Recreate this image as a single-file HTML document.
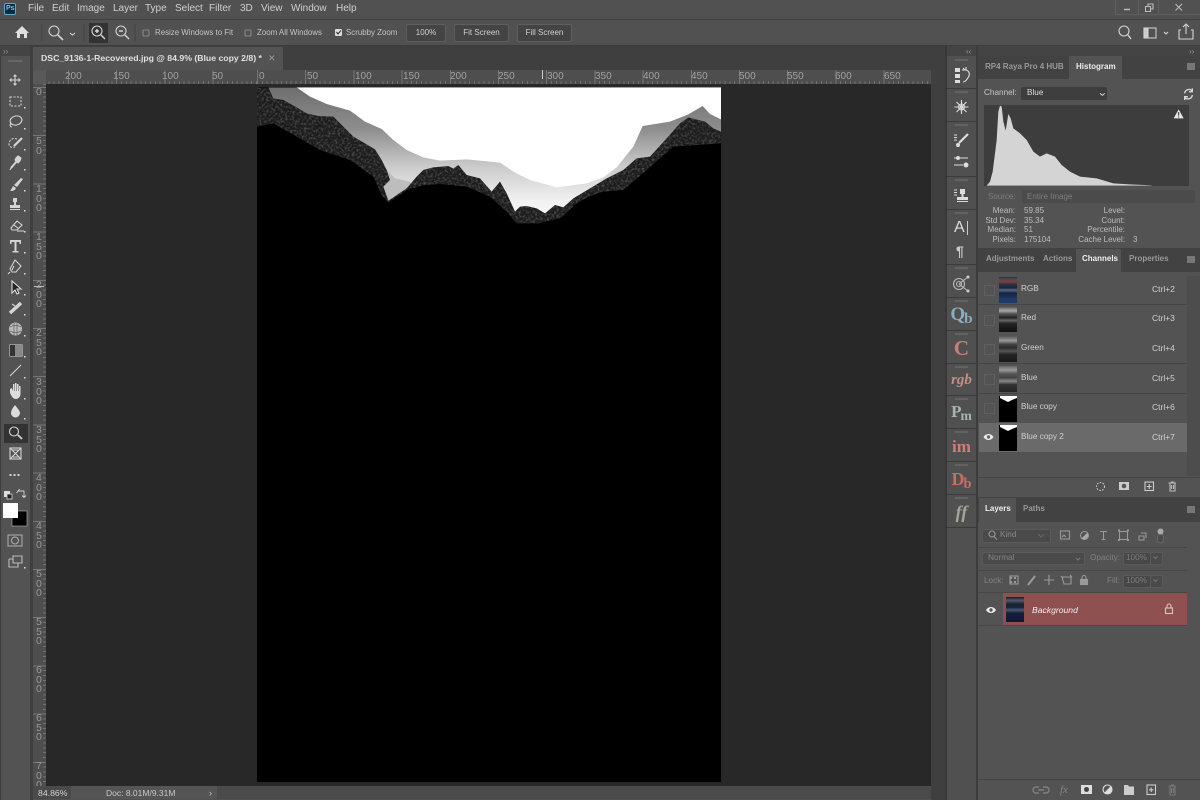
<!DOCTYPE html>
<html><head><meta charset="utf-8"><style>
html,body{margin:0;padding:0;background:#515151}
#app{position:relative;width:1200px;height:800px;overflow:hidden;background:#515151;font-family:"Liberation Sans",sans-serif;font-size:9px;color:#c8c8c8}
.b{position:absolute}
.t{position:absolute;white-space:nowrap;line-height:12px}
.m{font-size:10px;top:3px;color:#cfcfcf}
.o{font-size:7.9px;top:27px;color:#c4c4c4}
.btn{position:absolute;top:24px;height:16px;background:#444;border:1px solid #5e5e5e;border-radius:2px;text-align:center;line-height:16px;font-size:8px;color:#d0d0d0}
.rt{position:absolute;top:71px;font-size:10px;color:#a0a0a0;line-height:12px}
.rl{position:absolute;left:36px;width:10px;font-size:10.5px;line-height:9.5px;color:#989898}
.tab{position:absolute;font-size:8px;font-weight:bold;color:#999;line-height:12px;white-space:nowrap}
.ac{color:#eee}
.row{position:absolute;left:979px;width:208px;height:29px;background:#535353;border-bottom:1px solid #454545}
.lb{position:absolute;left:1021px;font-size:8.2px;color:#d0d0d0;line-height:12px;white-space:nowrap}
.sc{position:absolute;left:1152px;font-size:8.5px;color:#d0d0d0;line-height:12px}
.th{position:absolute;left:999px;width:18px;height:26px;background:#111}
.ck{position:absolute;left:984px;width:9px;height:9px;border:1px solid #5f5f5f}
.s{position:absolute;font-size:8px;line-height:10px;color:#bdbdbd;white-space:nowrap}
.r{text-align:right}
.dk{position:absolute;left:947px;width:29px;height:1px;background:#3a3a3a}
.gp{position:absolute;left:955px;width:13px;height:2px;background:#626262}
.dt{position:absolute;left:947px;width:29px;text-align:center;font-family:"Liberation Serif",serif;font-weight:bold;line-height:24px;white-space:nowrap}
.dt i{font-size:.8em;position:relative;top:.22em;margin-left:-1px}
.fld{position:absolute;background:#4a4a4a;border:1px solid #5a5a5a;border-radius:2px}
.dim{color:#7d7d7d}
</style></head><body><div id="app">

<!-- chrome bars -->
<div class="b" style="left:0;top:19px;width:1200px;height:1px;background:#404040"></div>
<div class="b" style="left:0;top:45px;width:1200px;height:1px;background:#3c3c3c"></div>
<div class="b" style="left:0;top:46px;width:1200px;height:10px;background:#444"></div>
<div class="b" style="left:33px;top:46px;width:912px;height:24px;background:#3f3f3f"></div>

<!-- left toolbar -->
<div class="b" style="left:0;top:56px;width:1px;height:744px;background:#3c3c3c"></div>
<div class="b" style="left:1px;top:56px;width:29px;height:744px;background:#535353"></div>
<div class="b" style="left:30px;top:46px;width:3px;height:754px;background:#3f3f3f"></div>
<div class="b" style="left:8px;top:60px;width:14px;height:2px;background:#666"></div>
<div class="b" style="left:4px;top:424px;width:24px;height:19px;background:#333;border-radius:1px"></div>

<!-- Tab -->
<div class="b" style="left:33px;top:47px;width:250px;height:23px;background:#535353"></div>
<div class="t" style="left:41px;top:52px;font-size:8.7px;color:#e0e0e0;font-weight:bold">DSC_9136-1-Recovered.jpg @ 84.9% (Blue copy 2/8) *</div>
<div class="t" style="left:268px;top:52px;font-size:9px;color:#999">✕</div>

<!-- rulers -->
<div class="b" style="left:33px;top:70px;width:912px;height:14px;background-color:#4e4e4e;background-image:repeating-linear-gradient(90deg,#767676 0 1px,transparent 1px 48.2px),repeating-linear-gradient(90deg,#727272 0 1px,transparent 1px 4.82px);background-size:auto,auto 3px;background-position:224px 0,224px 100%;background-repeat:repeat,repeat-x"></div>
<div class="b" style="left:33px;top:84px;width:13px;height:702px;background-color:#4e4e4e;background-image:repeating-linear-gradient(180deg,#767676 0 1px,transparent 1px 48.2px),repeating-linear-gradient(180deg,#727272 0 1px,transparent 1px 4.82px);background-size:auto,3px auto;background-position:0 3px,100% 3px;background-repeat:repeat,repeat-y;overflow:hidden"></div>
<div class="b" style="left:33px;top:70px;width:13px;height:14px;background:#595959"></div>
<div class="b" style="left:931px;top:70px;width:14px;height:730px;background:#3f3f3f"></div>
<div class="b" style="left:945px;top:46px;width:2px;height:754px;background:#383838"></div>

<span class="rt" style="left:65px">200</span><span class="rt" style="left:113px">150</span><span class="rt" style="left:162px">100</span><span class="rt" style="left:212px">50</span><span class="rt" style="left:259px">0</span><span class="rt" style="left:307px">50</span><span class="rt" style="left:355px">100</span><span class="rt" style="left:403px">150</span><span class="rt" style="left:450px">200</span><span class="rt" style="left:498px">250</span><span class="rt" style="left:547px">300</span><span class="rt" style="left:595px">350</span><span class="rt" style="left:643px">400</span><span class="rt" style="left:691px">450</span><span class="rt" style="left:739px">500</span><span class="rt" style="left:787px">550</span><span class="rt" style="left:835px">600</span><span class="rt" style="left:884px">650</span>
<div class="b" style="left:542px;top:70px;width:1px;height:9px;background:#ccc"></div>

<!-- pasteboard + image -->
<div class="b" style="left:46px;top:84px;width:885px;height:702px;background:#282828"></div>
<div class="b" style="left:257px;top:87px;width:464px;height:695px;background:#000"></div>
<svg class="b" style="left:240px;top:80px" width="500" height="160" viewBox="0 0 1500 480">
<defs>
<linearGradient id="sky" x1="0" y1="0" x2="0" y2="1"><stop offset="0" stop-color="#6e6e6e"/><stop offset=".3" stop-color="#8e8e8e"/><stop offset=".55" stop-color="#c8c8c8"/><stop offset=".8" stop-color="#f0f0f0"/><stop offset="1" stop-color="#fff"/></linearGradient>
<clipPath id="cl"><rect x="51" y="22" width="1392" height="458"/></clipPath>
<filter id="nz" x="0" y="0" width="100%" height="100%" color-interpolation-filters="sRGB"><feTurbulence type="fractalNoise" baseFrequency=".14" numOctaves="2" seed="7" result="n"/><feColorMatrix in="n" values="0 0 0 0 .36 0 0 0 0 .36 0 0 0 0 .36 2 0 0 0 -.85" result="c"/><feComposite in="c" in2="SourceGraphic" operator="in" result="d"/><feMerge><feMergeNode in="SourceGraphic"/><feMergeNode in="d"/></feMerge></filter>
</defs>
<g clip-path="url(#cl)">
<rect x="50" y="22" width="1400" height="420" fill="url(#sky)"/>
<path d="M170 22L210 50 260 72 330 92 375 125 425 147 460 180 500 210 550 232 600 242 680 238 780 248 825 278 870 300 950 322 1040 310 1090 292 1130 262 1180 200 1208 138 1290 125 1345 103 1388 78 1410 102 1443 118V0H170Z" fill="#fff"/>
<path d="M440 270L465 295 510 305 520 320 460 350 445 362 425 325Z" fill="#bdbdbd"/>
<path filter="url(#nz)" fill="#1c1c1c" d="M50 22H85L100 55 130 60 170 82 200 100 235 108 280 110 310 140 340 170 375 190 405 208 425 240 440 270 450 300 430 320 445 362 500 325 530 290 550 270 580 262 625 258 640 266 655 255 680 285 720 295 755 335 780 305 800 340 825 395 840 380 860 378 890 385 915 400 945 375 970 382 1000 355 1050 325 1100 295 1150 270 1190 235 1230 230 1280 175 1320 130 1345 112 1395 125 1420 145 1443 155V480H50Z"/>
<path fill="#000" d="M50 140L100 130 170 170 240 210 330 240 400 290 425 345 445 368 500 330 550 316 600 312 680 320 750 350 800 395 830 430 895 430 960 415 1010 370 1050 348 1090 335 1150 330 1220 270 1300 200 1443 190V480H50Z"/>
</g>
</svg>

<!-- left ruler digits -->
<div class="rl" style="top:88px">0</div><div class="rl" style="top:137px">5<br>0</div><div class="rl" style="top:185px">1<br>0<br>0</div><div class="rl" style="top:233px">1<br>5<br>0</div><div class="rl" style="top:281px">2<br>0<br>0</div><div class="rl" style="top:329px">2<br>5<br>0</div><div class="rl" style="top:378px">3<br>0<br>0</div><div class="rl" style="top:426px">3<br>5<br>0</div><div class="rl" style="top:474px">4<br>0<br>0</div><div class="rl" style="top:522px">4<br>5<br>0</div><div class="rl" style="top:570px">5<br>0<br>0</div><div class="rl" style="top:618px">5<br>5<br>0</div><div class="rl" style="top:666px">6<br>0<br>0</div><div class="rl" style="top:714px">6<br>5<br>0</div><div class="rl" style="top:762px;height:24px;overflow:hidden">7<br>0<br>0</div>
<div class="b" style="left:34px;top:286px;width:10px;height:1px;background:#bbb"></div>

<!-- status bar -->
<div class="b" style="left:33px;top:786px;width:898px;height:13px;background:#4a4a4a"></div>
<div class="b" style="left:71px;top:786px;width:146px;height:13px;background:#555"></div>
<div class="t" style="left:38px;top:787px;font-size:8.7px;color:#d0d0d0">84.86%</div>
<div class="t" style="left:106px;top:787px;font-size:8.5px;color:#c8c8c8">Doc: 8.01M/9.31M</div>
<div class="t" style="left:209px;top:787px;font-size:9px;color:#c8c8c8">›</div>

<!-- menu -->
<div class="b" style="left:4px;top:3px;width:12px;height:12px;background:#0e2a3d;border:1px solid #5fa8cf;border-radius:2px;box-sizing:border-box"></div>
<div class="t" style="left:6px;top:3px;font-size:7px;font-weight:bold;color:#7cc0e8">Ps</div>
<span class="t m" style="left:28px">File</span><span class="t m" style="left:52px">Edit</span><span class="t m" style="left:77px">Image</span><span class="t m" style="left:113px">Layer</span><span class="t m" style="left:145px">Type</span><span class="t m" style="left:175px">Select</span><span class="t m" style="left:209px">Filter</span><span class="t m" style="left:240px">3D</span><span class="t m" style="left:261px">View</span><span class="t m" style="left:291px">Window</span><span class="t m" style="left:336px">Help</span>

<!-- options -->
<div class="b" style="left:89px;top:23px;width:19px;height:20px;background:#333;border:0"></div>
<span class="t o" style="left:155px">Resize Windows to Fit</span>
<span class="t o" style="left:257px">Zoom All Windows</span>
<span class="t o" style="left:346px">Scrubby Zoom</span>
<div class="btn" style="left:406px;width:38px">100%</div>
<div class="btn" style="left:454px;width:53px">Fit Screen</div>
<div class="btn" style="left:517px;width:53px">Fill Screen</div>

<!-- right dock -->
<div class="b" style="left:947px;top:56px;width:29px;height:744px;background:#505050"></div>
<div class="b" style="left:976px;top:46px;width:2px;height:754px;background:#3c3c3c"></div>
<div class="dk" style="top:88px"></div><div class="dk" style="top:121px"></div><div class="dk" style="top:176px"></div><div class="dk" style="top:209px"></div><div class="dk" style="top:264px"></div><div class="dk" style="top:297px"></div><div class="dk" style="top:330px"></div><div class="dk" style="top:363px"></div><div class="dk" style="top:395px"></div><div class="dk" style="top:428px"></div><div class="dk" style="top:461px"></div><div class="dk" style="top:494px"></div><div class="dk" style="top:527px"></div>
<div class="gp" style="top:59px"></div><div class="gp" style="top:91px"></div><div class="gp" style="top:124px"></div><div class="gp" style="top:179px"></div><div class="gp" style="top:212px"></div><div class="gp" style="top:267px"></div><div class="gp" style="top:300px"></div><div class="gp" style="top:333px"></div><div class="gp" style="top:366px"></div><div class="gp" style="top:398px"></div><div class="gp" style="top:431px"></div><div class="gp" style="top:464px"></div><div class="gp" style="top:497px"></div>
<div class="t" style="left:966px;top:46px;font-size:8px;color:#999">‹‹</div>
<div class="t" style="left:1189px;top:46px;font-size:8px;color:#999">››</div>
<div class="t" style="left:3px;top:46px;font-size:8px;color:#999">››</div>
<div class="t" style="left:954px;top:222px;font-size:16px;color:#ddd">A</div><div class="b" style="left:967px;top:221px;width:1px;height:14px;background:#ccc"></div>
<div class="t" style="left:956px;top:245px;font-size:14px;font-weight:bold;color:#ccc">¶</div>
<div class="dt" style="top:303px;font-size:19px;color:#86aebb">Q<i style="font-style:normal">b</i></div>
<div class="dt" style="top:336px;font-size:21px;color:#c97f76">C</div>
<div class="dt" style="top:368px;font-size:15px;color:#c48d84;font-style:italic">rgb</div>
<div class="dt" style="top:400px;font-size:17px;color:#a6b6b0">P<i style="font-style:normal">m</i></div>
<div class="dt" style="top:435px;font-size:17px;color:#cf7d76">im</div>
<div class="dt" style="top:467px;font-size:18px;color:#c76d66">D<i style="font-style:normal">b</i></div>
<div class="dt" style="top:500px;font-size:18px;color:#a5a599;font-style:italic">ff</div>

<!-- histogram panel -->
<div class="b" style="left:978px;top:56px;width:222px;height:23px;background:#424242"></div>
<div class="b" style="left:1069px;top:56px;width:53px;height:23px;background:#535353"></div>
<div class="b" style="left:978px;top:79px;width:222px;height:169px;background:#535353"></div>
<div class="tab" style="left:985px;top:61px">RP4 Raya Pro 4 HUB</div>
<div class="tab ac" style="left:1076px;top:61px">Histogram</div>
<div class="t" style="left:984px;top:87px;font-size:8.2px">Channel:</div>
<div class="b" style="left:1021px;top:87px;width:86px;height:13px;background:#3e3e3e;border-radius:2px"></div>
<div class="t" style="left:1027px;top:87px;font-size:8.2px;color:#ddd">Blue</div>
<div class="b" style="left:984px;top:105px;width:205px;height:81px;background:#3d3d3d"></div>
<svg class="b" style="left:940px;top:40px" width="260" height="220" viewBox="0 0 780 660">
<path fill="#d4d4d4" d="M140 437L150 425 158 395 165 340 170 300 175 215 180 197 185 200 190 245 197 272 205 222 212 235 220 265 240 280 260 300 280 335 300 350 320 340 345 350 365 375 390 395 420 410 470 415 520 430 570 433 635 436V437Z"/>
<path fill="#e6e6e6" d="M716 208L731 235H701Z"/><path stroke="#333" stroke-width="3" d="M716 216V227M716 229V232"/>
<path fill="none" stroke="#d8d8d8" stroke-width="4" d="M734 160A13 13 0 0 1 757 153M757 165A13 13 0 0 1 734 172M757 145V155H747M734 180V170H744"/>
<path fill="none" stroke="#d8d8d8" stroke-width="3" d="M480 160L487 166 494 160"/>
</svg>
<div class="s dim" style="left:988px;top:192px">Source:</div>
<div class="b" style="left:1022px;top:190px;width:173px;height:13px;background:#4b4b4b"></div>
<div class="s dim" style="left:1027px;top:192px">Entire Image</div>
<div class="s r" style="left:985px;top:206px;width:30px">Mean:</div><div class="s" style="left:1024px;top:206px">59.85</div>
<div class="s r" style="left:975px;top:216px;width:41px">Std Dev:</div><div class="s" style="left:1024px;top:216px">35.34</div>
<div class="s r" style="left:985px;top:225px;width:31px">Median:</div><div class="s" style="left:1024px;top:225px">51</div>
<div class="s r" style="left:985px;top:235px;width:31px">Pixels:</div><div class="s" style="left:1024px;top:235px">175104</div>
<div class="s r" style="left:1065px;top:206px;width:60px">Level:</div><div class="s r" style="left:1065px;top:216px;width:60px">Count:</div><div class="s r" style="left:1065px;top:225px;width:60px">Percentile:</div><div class="s r" style="left:1065px;top:235px;width:60px">Cache Level:</div><div class="s" style="left:1133px;top:235px">3</div>

<!-- channels panel -->
<div class="b" style="left:978px;top:248px;width:222px;height:24px;background:#424242"></div>
<div class="b" style="left:1076px;top:249px;width:45px;height:23px;background:#535353"></div>
<div class="tab" style="left:986px;top:253px">Adjustments</div><div class="tab" style="left:1043px;top:253px">Actions</div><div class="tab ac" style="left:1082px;top:253px">Channels</div><div class="tab" style="left:1129px;top:253px">Properties</div>
<div class="b" style="left:978px;top:272px;width:222px;height:226px;background:#535353"></div>
<div class="b" style="left:1187px;top:276px;width:13px;height:200px;background:#4d4d4d"></div>
<div class="row" style="top:275px"></div><div class="row" style="top:305px"></div><div class="row" style="top:334px"></div><div class="row" style="top:364px"></div><div class="row" style="top:394px"></div>
<div class="row" style="top:423px;background:#6a6a6a;border:0;height:29px"></div>
<div class="b" style="left:978px;top:477px;width:222px;height:1px;background:#454545"></div>

<div class="ck" style="top:285px"></div><div class="ck" style="top:315px"></div><div class="ck" style="top:344px"></div><div class="ck" style="top:374px"></div><div class="ck" style="top:403px"></div>
<div class="th" style="top:277px;background:linear-gradient(180deg,#33343c 0,#4a4a55 10%,#8a3a3a 18%,#283245 28%,#1c2436 42%,#5a6a85 50%,#18243f 62%,#1d3a66 85%,#1d3a66 100%)"></div>
<div class="th" style="top:306px;background:linear-gradient(180deg,#444 0,#aaa 18%,#555 30%,#222 45%,#666 55%,#222 68%,#111 100%)"></div>
<div class="th" style="top:336px;background:linear-gradient(180deg,#555 0,#999 18%,#444 32%,#2b2b2b 45%,#555 58%,#222 72%,#1a1a1a 100%)"></div>
<div class="th" style="top:366px;background:linear-gradient(180deg,#666 0,#999 16%,#555 30%,#444 45%,#888 58%,#333 72%,#262626 100%)"></div>
<div class="th" style="top:396px;background:#000"></div>
<div class="th" style="top:425px;background:#000"></div>
<svg class="b" style="left:999px;top:396px" width="18" height="26"><path fill="#fff" d="M1 0H18V2L13 4 9 6 5 4 1 2Z"/></svg>
<svg class="b" style="left:999px;top:425px" width="18" height="26"><path fill="#fff" d="M1 0H18V2L13 4 9 6 5 4 1 2Z"/></svg>
<div class="lb" style="top:283px">RGB</div><div class="lb" style="top:312px">Red</div><div class="lb" style="top:342px">Green</div><div class="lb" style="top:372px">Blue</div><div class="lb" style="top:401px">Blue copy</div><div class="lb" style="top:431px">Blue copy 2</div>
<div class="sc" style="top:283px">Ctrl+2</div><div class="sc" style="top:312px">Ctrl+3</div><div class="sc" style="top:342px">Ctrl+4</div><div class="sc" style="top:372px">Ctrl+5</div><div class="sc" style="top:401px">Ctrl+6</div><div class="sc" style="top:431px">Ctrl+7</div>

<!-- layers panel -->
<div class="b" style="left:978px;top:497px;width:222px;height:25px;background:#424242"></div>
<div class="b" style="left:979px;top:498px;width:37px;height:24px;background:#535353"></div>
<div class="tab ac" style="left:985px;top:503px">Layers</div><div class="tab" style="left:1023px;top:503px">Paths</div>
<div class="b" style="left:978px;top:522px;width:222px;height:278px;background:#535353"></div>
<div class="b" style="left:978px;top:547px;width:209px;height:1px;background:#474747"></div>
<div class="b" style="left:978px;top:570px;width:209px;height:1px;background:#474747"></div>
<div class="b" style="left:978px;top:592px;width:209px;height:1px;background:#474747"></div>
<div class="b" style="left:978px;top:625px;width:209px;height:1px;background:#474747"></div>
<div class="b" style="left:978px;top:779px;width:222px;height:1px;background:#454545"></div>
<div class="fld" style="left:982px;top:529px;width:67px;height:12px"></div>
<div class="t" style="left:1000px;top:529px;font-size:8.2px;color:#8a8a8a">Kind</div>
<div class="fld" style="left:982px;top:552px;width:101px;height:11px"></div>
<div class="t" style="left:988px;top:552px;font-size:8.2px;color:#858585">Normal</div>
<div class="t" style="left:1090px;top:552px;font-size:8.2px;color:#808080">Opacity:</div>
<div class="fld" style="left:1123px;top:552px;width:26px;height:11px;background:#474747"></div>
<div class="t" style="left:1126px;top:552px;font-size:8.2px;color:#7d7d7d">100%</div>
<div class="fld" style="left:1150px;top:552px;width:11px;height:11px"></div>
<div class="t" style="left:984px;top:575px;font-size:8.2px;color:#858585">Lock:</div>
<div class="t" style="left:1107px;top:575px;font-size:8.2px;color:#808080">Fill:</div>
<div class="fld" style="left:1123px;top:575px;width:26px;height:11px;background:#474747"></div>
<div class="t" style="left:1126px;top:575px;font-size:8.2px;color:#7d7d7d">100%</div>
<div class="fld" style="left:1150px;top:575px;width:11px;height:11px"></div>
<div class="b" style="left:1003px;top:593px;width:184px;height:32px;background:#8f5050"></div>
<div class="b" style="left:1006px;top:597px;width:18px;height:25px;background:linear-gradient(180deg,#1a1a22 0,#555a6a 14%,#1b2233 28%,#16233c 42%,#4a5a78 52%,#14213a 64%,#0f1a30 100%)"></div>
<div class="t" style="left:1032px;top:604px;font-size:8.6px;font-style:italic;color:#eee">Background</div>

<!-- icons overlay -->
<svg class="b" style="left:0;top:0" width="1200" height="800" viewBox="0 0 1200 800" fill="none" stroke="#d4d4d4" stroke-width="1.100">
<!-- options icons -->
<path fill="#e0e0e0" stroke="none" d="M22 26L29 33H27V38H24V34H20V38H17V33H15Z"/>
<path stroke="#444" d="M42 24V41M135 24V41M84 24V41"/>
<circle cx="54" cy="31" r="5"/><path stroke-width="1.600" d="M58 35L63 40"/><path d="M70 33L72.500 35 75 33"/>
<circle cx="97" cy="31" r="5"/><path stroke-width="1.500" d="M101 35L105 39M95 31H99M97 29V33"/>
<circle cx="121" cy="31" r="5"/><path stroke-width="1.500" d="M125 35L129 39M119 31H123"/>
<rect x="143" y="30" width="6" height="6" rx="1" stroke="#888"/>
<rect x="245" y="30" width="6" height="6" rx="1" stroke="#888"/>
<rect x="335" y="29" width="7" height="7" rx="1" fill="#ddd" stroke="none"/><path stroke="#333" d="M336.500 32L338 34 341 30.500"/>
<circle cx="1124" cy="31" r="5"/><path stroke-width="1.400" d="M1128 35L1131 39"/>
<rect x="1144" y="28" width="12" height="10" stroke="#ccc"/><path fill="#ccc" d="M1144 28H1148V38H1144Z"/><path d="M1164 32L1166 34 1168 32"/>
<path d="M1181 30H1179V39H1193V30H1191M1186 34V25M1183 27L1186 24 1189 27"/>
<!-- window -->
<path stroke="#5e5e5e" d="M1115.500 0V14.500H1200M1138.500 0V14.500M1158.500 0V14.500"/>
<path stroke="#bbb" stroke-width="1.500" d="M1124 9.500H1130"/>
<path stroke="#bbb" d="M1145.500 6.500H1150.500V11.500H1145.500ZM1148 6.500V4H1153V9H1150.500"/>
<path stroke="#bbb" d="M1175.500 4L1182 10.500M1182 4L1175.500 10.500"/>
<!-- tools -->
<path d="M15 75V85M10 80H20M13.500 76.500L15 75 16.500 76.500M13.500 83.500L15 85 16.500 83.500M11.500 78.500L10 80 11.500 81.500M18.500 78.500L20 80 18.500 81.500"/>
<rect x="10" y="97" width="11" height="9" stroke-dasharray="2 1.500"/>
<ellipse cx="16" cy="120.500" rx="6" ry="4.500" transform="rotate(-15 16 120.500)"/><path d="M11 123C9 126 11 127 12 127"/>
<path stroke-dasharray="2 1.500" d="M17 139C12 137 9 141 9 144S12 148 15 147"/><path stroke-width="2.200" d="M14 146L22 138"/>
<path stroke-width="2" d="M11 168L17 161"/><path fill="#d4d4d4" d="M16 158L18 156 21 158 20 161 18 163 15 160Z"/><path d="M10 170L12 166"/>
<path fill="#d4d4d4" stroke="none" d="M21 178L23 179 17 187 14 185Z M13 186L16 188C15 191 12 191 10 191 11 190 12 188 13 186Z"/>
<path fill="#d4d4d4" stroke="none" d="M13 198H17V202H13ZM14 202H16V205H20V208H10V205H14ZM10 209H20V210H10Z"/>
<path d="M11 228L17 221 22 225 17 230H12ZM14 225L19 229M17 231H24"/>
<path fill="#d4d4d4" stroke="none" d="M10 240H21V244H19.500V242H16.500V251H18.500V252.500H12.500V251H14.500V242H11.500V244H10Z"/>
<path d="M15 260L21 266 16 272H12L10 269ZM10 272L8 274M14 266L12 270"/>
<path fill="#222" stroke="#ddd" d="M12 281V293L15 290 17 294 19 293 17 289H21Z"/>
<path stroke-width="3.500" d="M10 313L21 303"/><path d="M12 304L15 306"/>
<circle cx="15.500" cy="329" r="6.500" fill="#bbb" stroke="none"/><path stroke="#666" stroke-width=".8" d="M10 327C13 325 18 325 21 327M10 331C13 333 18 333 21 331M14 323V335M17 323V335"/>
<rect x="10" y="345" width="12" height="11" stroke="#ccc"/><path fill="#888" stroke="none" d="M10 345H22V356H16Z"/><path fill="#333" stroke="none" d="M10 345H15V356H10Z"/>
<path d="M10 376L21 365"/>
<path fill="#ddd" stroke="none" d="M10 389L12 388 13 391V384H14.500V391H15V383H16.500V391H17V384H18.500V391H19V386H20.500V394C20.500 397 18 399 16 399 13 399 12 397 10 393Z"/>
<path fill="#ddd" stroke="none" d="M15 405C12 409 11 411 11 413A4.500 4.500 0 0 0 20 413C20 411 18 409 15 405Z"/>
<circle cx="14" cy="431.500" r="4.500"/><path stroke-width="1.800" d="M18 435L22 439"/>
<rect x="10" y="448" width="11" height="11"/><path d="M10 448L21 459M21 448L10 459M12 450L19 450M12 457H19"/>
<path stroke-width="2" stroke-dasharray="2 2" d="M9.500 475H21"/>
<rect x="4" y="491" width="6" height="6" fill="#ddd" stroke="none"/><rect x="7" y="494" width="5" height="5" fill="#222" stroke="#ddd" stroke-width=".8"/>
<path stroke-width=".9" d="M18 491H24V497M16.500 493L18 491 19.500 489M22 495.500L24 497.500 26 495.500"/>
<rect x="12" y="511" width="15" height="15" fill="#000" stroke="#bbb" stroke-width=".6"/>
<rect x="3" y="503" width="15" height="15" fill="#fff" stroke="none"/>
<rect x="8" y="535" width="14" height="11" stroke="#aaa"/><circle cx="15" cy="540.500" r="3.500" stroke="#aaa"/>
<path stroke="#bbb" d="M13 556H22V563H13ZM9 559H13M9 559V567H18V563"/>
<!-- flyout dots -->
<g fill="#ddd" stroke="none"><rect x="24" y="107" width="1.500" height="1.500"/><rect x="24" y="128" width="1.500" height="1.500"/><rect x="24" y="149" width="1.500" height="1.500"/><rect x="24" y="169" width="1.500" height="1.500"/><rect x="24" y="190" width="1.500" height="1.500"/><rect x="24" y="210" width="1.500" height="1.500"/><rect x="24" y="231" width="1.500" height="1.500"/><rect x="24" y="252" width="1.500" height="1.500"/><rect x="24" y="273" width="1.500" height="1.500"/><rect x="24" y="294" width="1.500" height="1.500"/><rect x="24" y="314" width="1.500" height="1.500"/><rect x="24" y="335" width="1.500" height="1.500"/><rect x="24" y="356" width="1.500" height="1.500"/><rect x="24" y="377" width="1.500" height="1.500"/><rect x="24" y="398" width="1.500" height="1.500"/><rect x="24" y="418" width="1.500" height="1.500"/><rect x="24" y="567" width="1.500" height="1.500"/></g>
<!-- dock icons -->
<g stroke="#ddd">
<path fill="#ddd" stroke="none" d="M955 68H960V72H955ZM955 74H960V78H955ZM955 80H960V83H955Z"/><path d="M963 68L965 70C969 70 970 74 969 76S966 82 963 82"/><path d="M962 70H966V67"/>
<circle cx="961.500" cy="107" r="3"/><path d="M961.500 100V114M954.500 107H968.500M956.500 102L966.500 112M966.500 102L956.500 112"/>
<path stroke-width=".9" d="M954 135H957M954 137.500H957M954 140H957"/><path stroke-width="2.200" d="M959 143L968 134"/><circle cx="958" cy="145" r="2" fill="#ddd" stroke="none"/>
<path d="M954 158H968M954 165H963"/><circle cx="958" cy="158" r="2" fill="#ddd" stroke="none"/><circle cx="966" cy="165" r="2.500" fill="#ddd" stroke="none"/>
<path stroke-width=".9" d="M954 190H957M954 192.500H957M954 195H957"/><path fill="#ddd" stroke="none" d="M960 189H965V194H963.500V197H968V200H957V197H961.500V194H960ZM957 201H968V202H957Z"/>
<circle cx="959" cy="284" r="5.500" stroke="#bbb"/><circle cx="959" cy="284" r="2.500" stroke="#bbb"/><path stroke="#bbb" d="M959 284L968 277M959 284L968 291"/><circle cx="968" cy="277" r="1.500" fill="#ccc" stroke="none"/><circle cx="968" cy="291" r="1.500" fill="#ccc" stroke="none"/>
</g>
<!-- channel eye -->
<path fill="#eee" stroke="none" d="M983.500 437C986 433 991 433 993.500 437 991 441 986 441 983.500 437Z"/><circle cx="988.500" cy="437" r="1.700" fill="#666" stroke="none"/>
<path fill="#eee" stroke="none" d="M986 610C988.500 606 993.500 606 996 610 993.500 614 988.500 614 986 610Z"/><circle cx="991" cy="610" r="1.700" fill="#555" stroke="none"/>
<!-- channel bottom -->
<g stroke="#ccc">
<circle cx="1100.500" cy="486.500" r="4" stroke-dasharray="1.500 1.500"/>
<rect x="1119" y="482" width="10" height="8" fill="#ccc" stroke="none"/><circle cx="1124" cy="486" r="2.300" fill="#555" stroke="none"/>
<rect x="1145" y="482" width="8.500" height="8.500"/><path d="M1149.200 484V489M1146.700 486.500H1151.700"/>
<path d="M1168.500 483H1176M1170 483V491H1175V483M1171 482H1174M1171.500 485V489M1173.500 485V489" stroke="#bbb"/>
</g>
<!-- layers filter icons -->
<g stroke="#999">
<circle cx="992" cy="534" r="3"/><path d="M994 536.500L997 539.500"/>
<path d="M1038 534L1041 537 1044 534" stroke="#666"/>
<rect x="1060.500" y="531" width="9" height="8"/><path d="M1062 537L1064 535 1066 537"/>
<circle cx="1084.500" cy="535.500" r="4"/><path fill="#aaa" stroke="none" d="M1081.700 538.300L1087.300 532.700A4 4 0 0 1 1081.700 538.300Z"/>
<path d="M1100 531.500H1107M1103.500 531.500V539.500M1101.500 539.500H1105.500"/>
<rect x="1119.500" y="531.500" width="8" height="8"/><path stroke-width="2" d="M1118 530.500H1120M1127 530.500H1129M1118 540H1120M1127 540H1129"/>
<path d="M1139 536H1144V540H1139ZM1141 533H1146V538"/>
</g>
<rect x="1157.500" y="534" width="6" height="9" rx="3" stroke="#666" fill="#4a4a4a"/><circle cx="1160.500" cy="531.500" r="3" fill="#aaa" stroke="none"/>
<path stroke="#777" d="M1076 558L1078 560 1080 558M1153.500 556.500L1155.500 558.500 1157.500 556.500M1153.500 579.500L1155.500 581.500 1157.500 579.500"/>
<!-- lock icons -->
<g stroke="#9a9a9a">
<rect x="1010" y="576" width="8" height="8"/><path stroke-width="2" stroke-dasharray="2 2" d="M1010 578H1018M1010 582H1018"/>
<path stroke-width="2" d="M1028 585L1035 576"/>
<path d="M1049 575V585M1044 580H1054"/>
<path d="M1062 577H1071V584H1064ZM1061 576L1063 578M1070 575L1072 577"/>
<rect x="1080.500" y="579.500" width="7" height="5" fill="#9a9a9a"/><path d="M1082 579.500V577.500A2 2 0 0 1 1086 577.500V579.500"/>
</g>
<rect x="1165.500" y="608" width="7" height="5.500" stroke="#e0c0c0"/><path stroke="#e0c0c0" d="M1167 608V606A2 2 0 0 1 1171 606V608"/>
<!-- layers bottom -->
<g stroke="#808080">
<path stroke-width="1.400" d="M1039 787H1036A3 3 0 0 0 1036 793H1039M1043 787H1046A3 3 0 0 1 1046 793H1043M1038 790H1044"/>
</g>
<rect x="1081" y="785" width="11" height="9" fill="#ddd" stroke="none"/><circle cx="1086.500" cy="789.500" r="2.500" fill="#444" stroke="none"/>
<circle cx="1107.500" cy="789.500" r="4.500" stroke="#ddd" fill="#555"/><path fill="#ddd" stroke="none" d="M1104.300 792.700L1110.700 786.300A4.500 4.500 0 0 1 1104.300 792.700Z"/>
<path fill="#ccc" stroke="none" d="M1124 785H1128L1129 786.500H1134V795H1124Z"/>
<rect x="1147" y="785" width="8.500" height="9.500" stroke="#ccc"/><path stroke="#ccc" d="M1151.200 787.500V792M1149 789.800H1153.500"/>
<path stroke="#7a7a7a" d="M1168.500 786H1176M1170 786V795H1175V786M1171 785H1174M1171.500 788V793M1173.500 788V793"/>
<!-- panel menus -->
<g fill="#777" stroke="none"><rect x="1187" y="63" width="8" height="7"/><rect x="1187" y="256" width="8" height="7"/><rect x="1187" y="506" width="8" height="7"/></g>
</svg>
<div class="t" style="left:1060px;top:784px;font-size:11px;font-style:italic;font-family:'Liberation Serif',serif;color:#888">fx</div>
</div></body></html>
